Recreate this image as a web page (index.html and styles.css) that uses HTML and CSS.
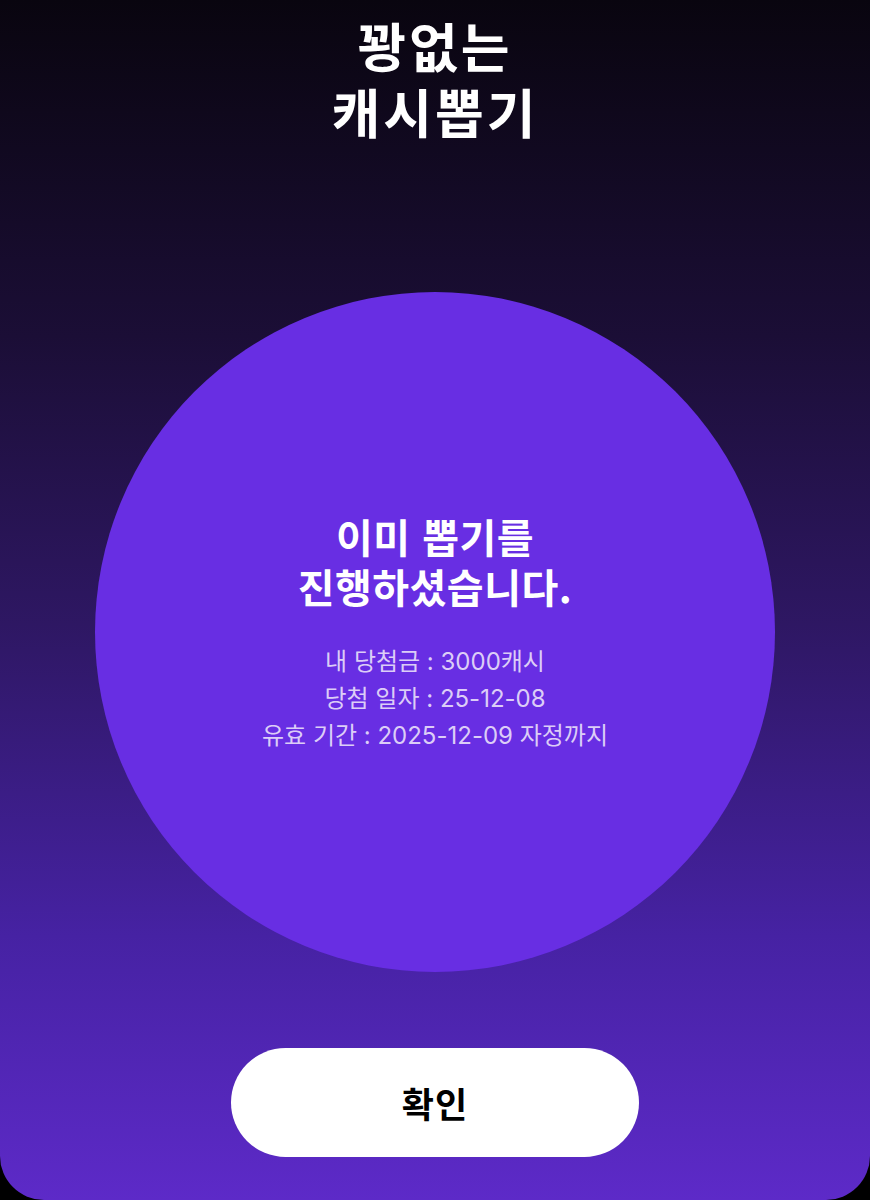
FILE: index.html
```html
<!DOCTYPE html>
<html lang="ko">
<head>
<meta charset="utf-8">
<title>꽝없는 캐시뽑기</title>
<link rel="stylesheet" href="styles.css">
</head>
<body>
    <main class="screen">
        <h1 class="title">
            <span class="line">꽝없는</span>
            <span class="line">캐시뽑기</span>
        </h1>
        <section class="result center-contents">
            <h2 class="result-title">
                <span class="line">이미 뽑기를</span>
                <span class="line">진행하셨습니다.</span>
            </h2>
            <ul class="result-info">
                <li>내 당첨금 : 3000캐시</li>
                <li>당첨 일자 : 25-12-08</li>
                <li>유효 기간 : 2025-12-09 자정까지</li>
            </ul>
        </section>
        <button class="confirm" type="button">확인</button>
    </main>
</body>
</html>
```

FILE: styles.css
```css
/**
 * Generic styles
 */
* {
    box-sizing: border-box;
}
body {
    margin: 0;
    background-color: #000;
    font-family: "Noto Sans CJK KR", "Noto Sans", sans-serif;
}
.center-contents {
    display: flex;
    flex-direction: column;
    justify-content: center;
    align-items: center;
}
.line {
    display: block;
}

/**
 * Screen with the gradient backdrop
 */
.screen {
    display: flex;
    flex-direction: column;
    align-items: center;
    width: 870px;
    height: 1200px;
    padding-top: 12px;
    border-radius: 0 0 44px 44px;
    background: linear-gradient(180deg, #09050f 0%, #1b0e36 28%, #2e1763 52%, #4622a3 78%, #5d2ac8 100%);
    overflow: hidden;
}
.title {
    margin: 0;
    color: #fff;
    font-size: 53px;
    font-weight: 700;
    line-height: 66px;
    text-align: center;
    letter-spacing: 3px;
}

/**
 * Result circle
 */
.result {
    width: 680px;
    height: 680px;
    margin-top: 148px;
    border-radius: 50%;
    background-color: #682ee3;
    color: #fff;
    text-align: center;
}
.result-title {
    margin: 0 0 30px;
    font-size: 40px;
    font-weight: 700;
    line-height: 50px;
    letter-spacing: 0.5px;
}
.result-info {
    list-style: none;
    margin: 2px 0 0;
    padding: 0;
    color: #dccdf7;
    font-family: "Inter", "Noto Sans CJK KR", sans-serif;
    font-size: 24px;
    line-height: 37px;
}

/**
 * Confirm button
 */
.confirm {
    width: 408px;
    height: 109px;
    margin-top: 76px;
    border: none;
    border-radius: 55px;
    background-color: #fff;
    color: #000;
    font-family: inherit;
    font-size: 35px;
    font-weight: 700;
    letter-spacing: 1px;
}
```
